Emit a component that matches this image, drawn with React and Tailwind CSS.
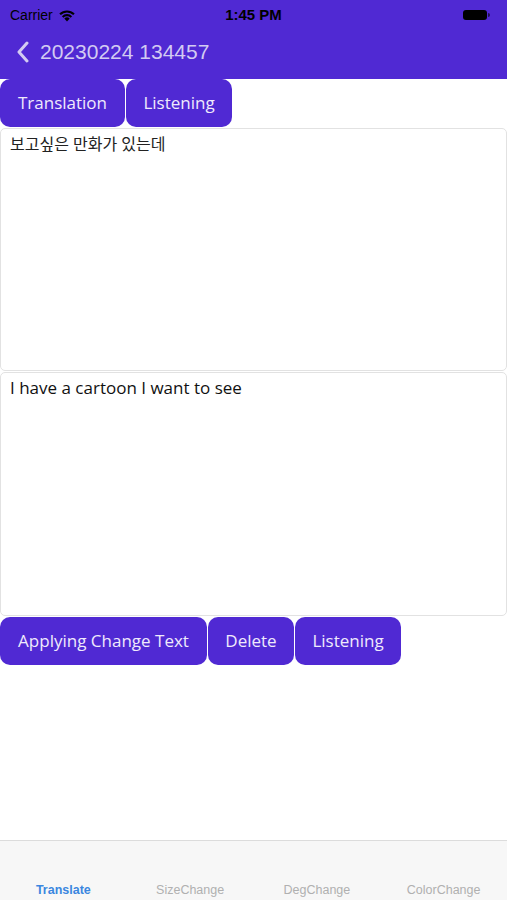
import React from 'react';

const font = { fontFamily: '"Open Sans", "Noto Sans", "Noto Sans CJK KR", sans-serif' };

function PillButton({ children, className = '' }) {
  return (
    <button
      type="button"
      className={`h-12 rounded-[10px] bg-[#5029d3] text-[17px] text-[#efeafc] ${className}`}
    >
      {children}
    </button>
  );
}

export default function App() {
  return (
    <div className="flex h-[900px] w-[507px] flex-col bg-white" style={font}>
      {/* Status bar + nav */}
      <header className="bg-[#5029d3]">
        <div className="relative flex h-[30px] items-center px-[10px]">
          <div className="flex items-center gap-[5px] text-[14px] text-black" style={{ fontFamily: '"Liberation Sans", sans-serif' }}>
            <span>Carrier</span>
            <svg width="18" height="13" viewBox="0 0 18 13">
              <path d="M9 12.5 L6.3 9.6 A4 4 0 0 1 11.7 9.6 Z" fill="#000" />
              <path d="M3.9 7.2 A7.3 7.3 0 0 1 14.1 7.2 L12.6 8.8 A5.2 5.2 0 0 0 5.4 8.8 Z" fill="#000" />
              <path d="M1.3 4.6 A11 11 0 0 1 16.7 4.6 L15.2 6.1 A8.9 8.9 0 0 0 2.8 6.1 Z" fill="#000" />
            </svg>
          </div>
          <span
            className="absolute left-1/2 -translate-x-1/2 text-[15px] font-bold text-black"
            style={{ fontFamily: '"Liberation Sans", sans-serif' }}
          >
            1:45 PM
          </span>
          <div className="ml-auto mr-[7px] flex items-center">
            <div className="h-[10px] w-[24px] rounded-[3px] bg-black" />
            <div className="ml-[1px] h-[4px] w-[2px] rounded-r-sm bg-black/60" />
          </div>
        </div>
        <div className="flex h-[49px] items-center gap-[10px] pb-[5px] pl-[16px]">
          <svg width="14" height="22" viewBox="0 0 14 22" fill="none">
            <path d="M11 2 L3 11 L11 20" stroke="#d3cbf2" strokeWidth="3" strokeLinecap="round" strokeLinejoin="round" />
          </svg>
          <span className="text-[21px] text-[#d3cbf2]" style={{ fontFamily: '"Liberation Sans", sans-serif' }}>
            20230224 134457
          </span>
        </div>
      </header>

      {/* Top buttons */}
      <div className="flex gap-px">
        <PillButton className="w-[125px]">Translation</PillButton>
        <PillButton className="w-[106px]">Listening</PillButton>
      </div>

      {/* Text areas */}
      <div className="mt-px h-[243px] rounded-[5px] border border-[#e2e2e2] px-[9px] pt-[3px] text-[16px] text-[#222]">
        보고싶은 만화가 있는데
      </div>
      <div className="mt-px h-[244px] rounded-[5px] border border-[#e2e2e2] px-[9px] pt-[2px] text-[17px] text-[#111]">
        I have a cartoon I want to see
      </div>

      {/* Action buttons */}
      <div className="mt-px flex gap-px">
        <PillButton className="w-[207px]">Applying Change Text</PillButton>
        <PillButton className="w-[86px]">Delete</PillButton>
        <PillButton className="w-[106px]">Listening</PillButton>
      </div>

      <div className="flex-1" />

      {/* Tab bar */}
      <nav
        className="grid h-[60px] grid-cols-4 border-t border-[#dcdcdc] bg-[#f7f7f7]"
        style={{ fontFamily: '"Liberation Sans", sans-serif' }}
      >
        {['Translate', 'SizeChange', 'DegChange', 'ColorChange'].map((t, i) => (
          <div key={t} className="flex items-end justify-center">
            <span className={`text-[12.5px] ${i === 0 ? 'font-bold text-[#3b87e0]' : 'text-[#b0b0b0]'}`}>{t}</span>
          </div>
        ))}
      </nav>
    </div>
  );
}
